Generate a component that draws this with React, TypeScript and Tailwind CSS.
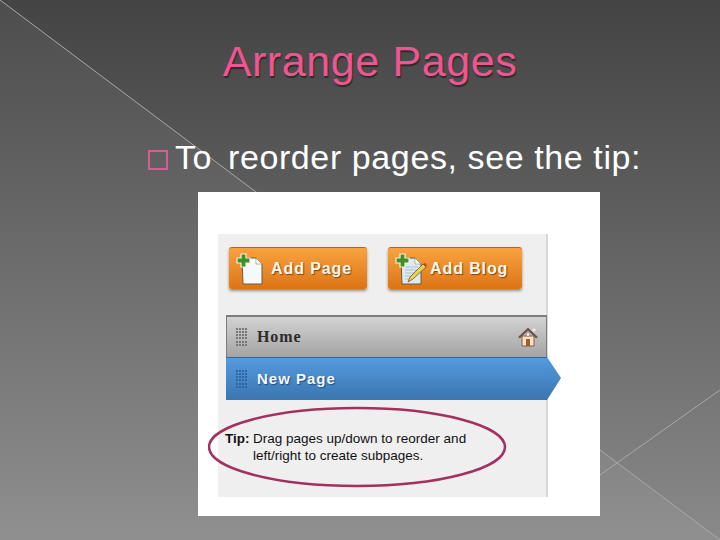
const sans = "font-['Liberation_Sans',Arial,sans-serif]";

function Grip({ className }: { className: string }) {
  return (
    <div className={`grid grid-cols-4 gap-px w-[11px] h-[18px] ${className}`}>
      {Array.from({ length: 24 }).map((_, i) => (
        <span key={i} className="bg-current w-[2px] h-[2px]" />
      ))}
    </div>
  );
}

function PageIcon({ blog }: { blog?: boolean }) {
  return (
    <svg width="34" height="32" viewBox="0 0 34 32" className="shrink-0">
      <path d="M6 5h14l6 6v20H7z" fill={blog ? '#dfe9f2' : '#f4f9fc'} stroke="#6b5a3a" strokeWidth="1" />
      <path d="M20 5v6h6z" fill="#fff" stroke="#8a8a7a" strokeWidth="0.6" />
      {blog && (
        <>
          <path d="M10 14h13M10 17h13M10 20h11M10 23h9M10 26h8" stroke="#9db4cc" strokeWidth="0.8" />
          <path d="M13 29l2-5L28 11l3 3-13 12z" fill="#e8d24f" stroke="#6d5a22" strokeWidth="0.8" />
          <path d="M28 11l3 3 1-2-2-2z" fill="#c8452f" />
        </>
      )}
      <path d="M4 1h5v4h4v5H9v4H4v-4H0V5h4z" fill="#3f8f2a" stroke="#f2f2e0" strokeWidth="1.2" transform="translate(1 0)" />
    </svg>
  );
}

function HomeIcon() {
  return (
    <svg width="20" height="20" viewBox="0 0 20 20" className="shrink-0">
      <path d="M4 9h12v10H4z" fill="#f8dfc6" stroke="#6b4a32" strokeWidth="0.8" />
      <path d="M0.5 10L10 1l9.5 9-1.3 1L10 3.5 1.8 11z" fill="#6e5444" stroke="#5a4030" strokeWidth="0.5" />
      <path d="M8 12h4v7H8z" fill="#a0602d" />
      <path d="M8.5 6h3v3h-3z" fill="#fff" stroke="#8a6a50" strokeWidth="0.5" />
      <circle cx="16" cy="3" r="1.6" fill="#f4f0ec" />
    </svg>
  );
}

function AddButton({ label, blog, width }: { label: string; blog?: boolean; width: string }) {
  return (
    <div className={`flex items-center h-[42px] rounded-[3px] border-t border-t-[#b5661a] bg-gradient-to-b from-[#f9a33e] to-[#dc7414] shadow-[0_2px_3px_rgba(90,60,20,0.55)] pl-[7px] gap-[1px] ${width}`}>
      <PageIcon blog={blog} />
      <span className={`${sans} font-bold text-[16px] tracking-[0.9px] text-[#fdf6ea] [text-shadow:1px_1px_1px_#7a4a12]`}>{label}</span>
    </div>
  );
}

export default function App() {
  return (
    <div className={`relative w-[720px] h-[540px] overflow-hidden bg-gradient-to-b from-[#444444] to-[#8a8a8a] ${sans}`}>
      {/* slide decoration */}
      <svg width="720" height="540" className="absolute inset-0">
        <path d="M0 0L720 540H0z" fill="#fff" fillOpacity="0.05" />
        <path d="M0 0L720 540" stroke="#a8a8a8" strokeWidth="1" />
        <path d="M720 390L590 482" stroke="#a8a8a8" strokeWidth="1" />
      </svg>

      <div className="relative flex flex-col items-center">
        <h1 className="mt-[36px] ml-[20px] h-[50px] text-[43px] leading-[50px] text-[#ef5590] tracking-[0.6px] [text-shadow:1px_2px_1px_#2c2c2c]">
          Arrange Pages
        </h1>

        <div className="self-start mt-[41px] ml-[148px] flex items-center h-[60px] text-[34px] text-white tracking-[0.6px]">
          <span className="w-[20px] h-[20px] mt-[6px] border-2 border-[#d85c90] mr-[7px]" />
          <span className="w-[53px]">To</span>
          <span>reorder pages, see the tip:</span>
        </div>

        {/* pasted screenshot */}
        <div className="self-start ml-[198px] mt-[5px] w-[402px] h-[324px] bg-white pt-[42px] pl-[20px]">
          <div className="relative w-[330px] h-[263px] bg-[#efefef] border-r-2 border-r-[#d8d8d8] pt-[13px]">
            <div className="flex gap-[21px] pl-[11px]">
              <AddButton label="Add Page" width="w-[138px]" />
              <AddButton label="Add Blog" blog width="w-[134px]" />
            </div>

            <div className="mt-[26px] ml-[8px] w-[321px] h-[42px] flex items-center border-t-2 border-x border-[#7c7c7c] bg-gradient-to-b from-[#d2d2d2] to-[#a4a4a4] pl-[9px] pr-[8px]">
              <Grip className="text-[#777777]" />
              <span className="ml-[10px] flex-1 font-['Liberation_Serif',serif] font-bold text-[16px] tracking-[0.9px] text-[#2b2b2b]">Home</span>
              <HomeIcon />
            </div>

            <div className="relative ml-[8px] w-[321px] h-[43px] flex items-center border-t border-t-[#2f6aa3] bg-gradient-to-b from-[#559ade] to-[#3a76b0] pl-[10px]">
              <Grip className="text-[#2f67a5]" />
              <span className="ml-[10px] font-bold text-[15px] tracking-[1px] text-[#f4f8fb] [text-shadow:1px_1px_1px_#234d78]">New Page</span>
              <svg width="14" height="43" viewBox="0 0 14 43" className="absolute left-full -top-px">
                <defs>
                  <linearGradient id="tip" x1="0" y1="0" x2="0" y2="1">
                    <stop offset="0" stopColor="#559ade" />
                    <stop offset="1" stopColor="#3a76b0" />
                  </linearGradient>
                </defs>
                <path d="M0 0L14 21L0 43z" fill="url(#tip)" />
              </svg>
            </div>

            <div className="mt-[30px] ml-[7px] flex text-[13.5px] leading-[17px] text-[#111111]">
              <span className="font-bold w-[28px] shrink-0">Tip:</span>
              <span>
                Drag pages up/down to reorder and
                <br />
                left/right to create subpages.
              </span>
            </div>

            <svg width="300" height="84" viewBox="0 0 300 84" className="absolute left-[-10px] top-[171px]">
              <ellipse cx="149" cy="42" rx="148" ry="39" fill="none" stroke="#a3305f" strokeWidth="2.5" />
            </svg>
          </div>
        </div>
      </div>
    </div>
  );
}
